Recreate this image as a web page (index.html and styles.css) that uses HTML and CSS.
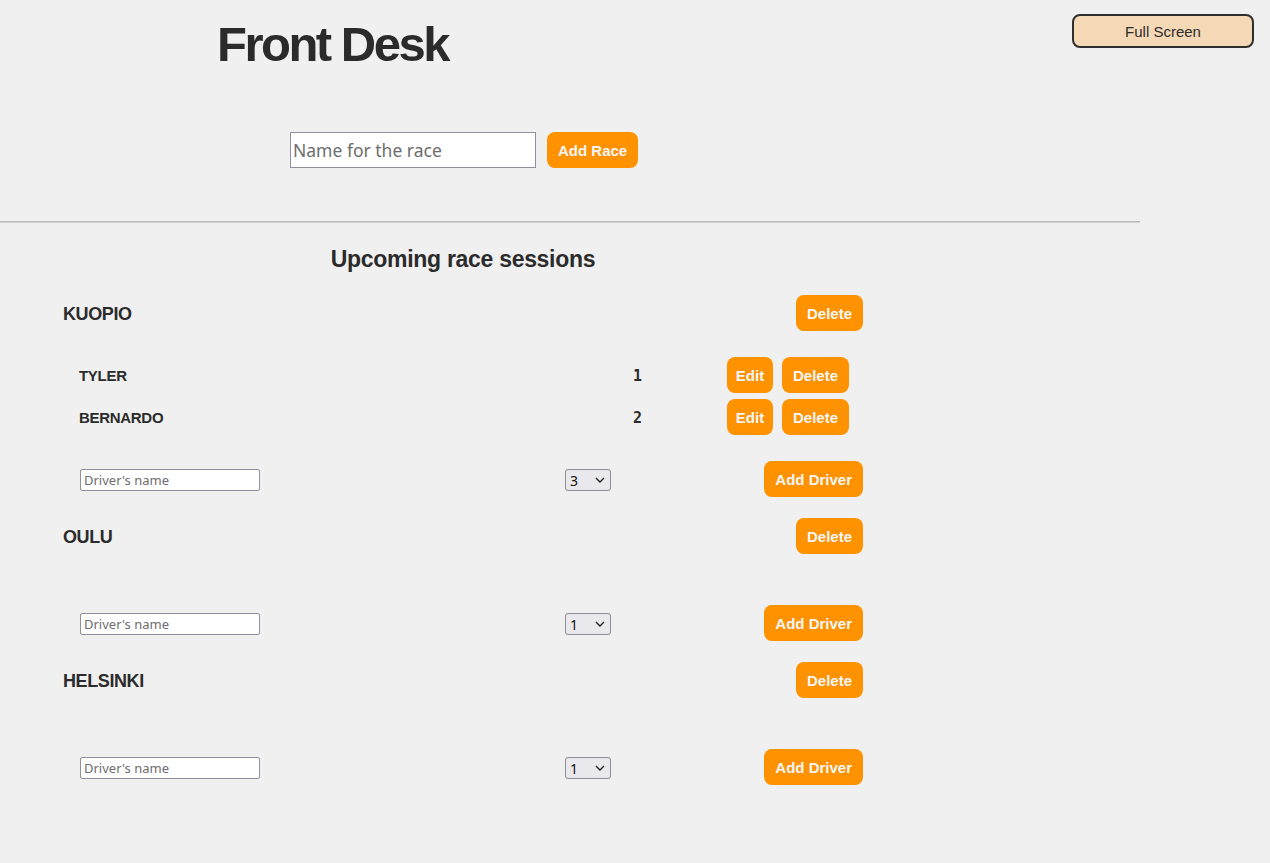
FILE: index.html
```html
<!DOCTYPE html>
<html lang="en">
<head>
<meta charset="utf-8">
<title>Front Desk</title>
<link rel="stylesheet" href="styles.css">
</head>
<body>
<header class="top">
  <h1 class="title">Front Desk</h1>
  <button class="fullscreen">Full Screen</button>
</header>
<form class="race-form">
  <input class="race-input" type="text" placeholder="Name for the race">
  <button type="button" class="btn">Add Race</button>
</form>
<hr class="divider">
<main class="sessions">
  <h2 class="sessions-title">Upcoming race sessions</h2>

  <section class="race">
    <div class="race-head">
      <span class="race-name">KUOPIO</span>
      <button class="btn">Delete</button>
    </div>
    <ul class="drivers">
      <li class="driver">
        <span class="driver-name">TYLER</span>
        <span class="driver-car">1</span>
        <span class="driver-actions"><button class="btn btn-edit">Edit</button><button class="btn">Delete</button></span>
      </li>
      <li class="driver">
        <span class="driver-name">BERNARDO</span>
        <span class="driver-car">2</span>
        <span class="driver-actions"><button class="btn btn-edit">Edit</button><button class="btn">Delete</button></span>
      </li>
    </ul>
    <div class="add-row">
      <input class="driver-input" type="text" placeholder="Driver's name">
      <span class="select-wrap">
        <select class="car-select"><option>3</option></select>
        <svg class="chev" width="10" height="6" viewBox="0 0 10 6"><path d="M1 1l4 4 4-4" fill="none" stroke="#222" stroke-width="1.4"/></svg>
      </span>
      <button class="btn">Add Driver</button>
    </div>
  </section>

  <section class="race">
    <div class="race-head">
      <span class="race-name">OULU</span>
      <button class="btn">Delete</button>
    </div>
    <ul class="drivers"></ul>
    <div class="add-row">
      <input class="driver-input" type="text" placeholder="Driver's name">
      <span class="select-wrap">
        <select class="car-select"><option>1</option></select>
        <svg class="chev" width="10" height="6" viewBox="0 0 10 6"><path d="M1 1l4 4 4-4" fill="none" stroke="#222" stroke-width="1.4"/></svg>
      </span>
      <button class="btn">Add Driver</button>
    </div>
  </section>

  <section class="race">
    <div class="race-head">
      <span class="race-name">HELSINKI</span>
      <button class="btn">Delete</button>
    </div>
    <ul class="drivers"></ul>
    <div class="add-row">
      <input class="driver-input" type="text" placeholder="Driver's name">
      <span class="select-wrap">
        <select class="car-select"><option>1</option></select>
        <svg class="chev" width="10" height="6" viewBox="0 0 10 6"><path d="M1 1l4 4 4-4" fill="none" stroke="#222" stroke-width="1.4"/></svg>
      </span>
      <button class="btn">Add Driver</button>
    </div>
  </section>
</main>
</body>
</html>
```

FILE: styles.css
```css
* { box-sizing: border-box; }

body {
  margin: 0;
  background: #f0f0f0;
  color: #2b2b2b;
  font-family: "Liberation Sans", Arial, sans-serif;
}

.top {
  display: flex;
  align-items: flex-start;
  padding: 0 16px 0 217px;
}

.title {
  margin: 20px 0 0 0;
  font-size: 49px;
  line-height: 49px;
  font-weight: 700;
  letter-spacing: -2.5px;
}

.fullscreen {
  margin: 14px 0 0 auto;
  width: 182px;
  height: 34px;
  background: #f5d8b6;
  border: 2px solid #2e2e2e;
  border-radius: 8px;
  font-family: "Liberation Sans", Arial, sans-serif;
  font-size: 15px;
  color: #2b2b2b;
  padding: 0;
}

.race-form {
  display: flex;
  gap: 11px;
  margin: 63px 0 0 290px;
}

.race-input {
  width: 246px;
  height: 36px;
  border: 1px solid #8f8f9d;
  border-radius: 0;
  background: #fff;
  padding: 0 2px;
  font-family: "Noto Sans", "DejaVu Sans", sans-serif;
  font-size: 17.5px;
}
.race-input::placeholder { color: #6d6d6d; }

.btn {
  height: 36px;
  padding: 0 11px;
  border: 0;
  border-radius: 8px;
  background: #fe9200;
  color: #f6f6f6;
  font-family: "Liberation Sans", Arial, sans-serif;
  font-size: 15px;
  font-weight: 700;
}

.btn-edit {
  width: 46px;
  padding: 0;
}

.divider {
  width: 1140px;
  margin: 53px 0 0 0;
  border: 0;
  border-top: 1px solid #b9b9b9;
  border-bottom: 1px solid #d2d2d2;
}

.sessions {
  width: 800px;
  margin-left: 63px;
  padding-top: 22px;
}

.sessions-title {
  margin: 0 0 22px 0;
  text-align: center;
  font-size: 23px;
  line-height: 28px;
  font-weight: 700;
  letter-spacing: -0.3px;
}

.race { margin-bottom: 21px; }

.race-head {
  display: flex;
  justify-content: space-between;
  align-items: center;
}

.race-name {
  font-size: 18px;
  font-weight: 700;
  letter-spacing: -0.4px;
  padding-top: 2px;
}

.drivers {
  list-style: none;
  margin: 0;
  padding: 26px 0 26px 0;
  display: flex;
  flex-direction: column;
  gap: 6px;
}
.drivers:empty { padding-bottom: 25px; }

.driver {
  display: grid;
  grid-template-columns: 554px 94px auto;
  align-items: center;
  padding-left: 16px;
  height: 36px;
}

.driver-name {
  font-size: 15px;
  font-weight: 700;
  letter-spacing: -0.3px;
}

.driver-car {
  font-family: "DejaVu Sans Mono", monospace;
  font-size: 15px;
  font-weight: 700;
  padding-top: 2px;
}

.driver-actions {
  display: flex;
  gap: 9px;
}

.add-row {
  display: grid;
  grid-template-columns: 485px 1fr auto;
  align-items: center;
  padding-left: 17px;
  height: 36px;
}

.driver-input {
  width: 180px;
  height: 22px;
  margin-top: 1px;
  border: 1px solid #8f8f9d;
  border-radius: 2px;
  background: #fff;
  padding: 0 3px;
  font-family: "Noto Sans", "DejaVu Sans", sans-serif;
  font-size: 13px;
}
.driver-input::placeholder { color: #6d6d6d; }

.select-wrap {
  position: relative;
  width: 46px;
  height: 22px;
  margin-top: 2px;
}

.car-select {
  appearance: none;
  width: 46px;
  height: 22px;
  border: 1px solid #8f8f9d;
  border-radius: 3px;
  background: #e9e9ed;
  padding: 0 4px;
  font-family: "Noto Sans", "DejaVu Sans", sans-serif;
  font-size: 14px;
  color: #111;
}

.chev {
  position: absolute;
  right: 6px;
  top: 8px;
  pointer-events: none;
}
```
